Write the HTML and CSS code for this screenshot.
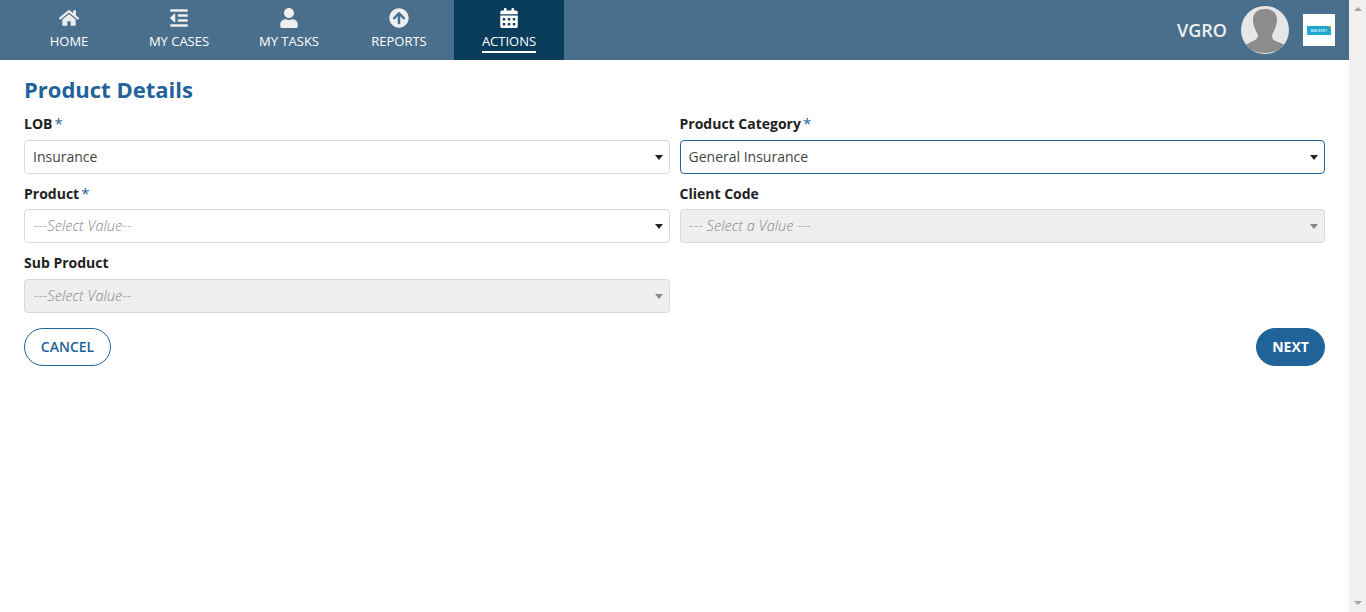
FILE: index.html
```html
<!DOCTYPE html>
<html>
<head lang="en">
    <meta charset="UTF-8">
    <title>Product Details</title>
    <link rel="stylesheet" href="styles.css">
</head>
<body>
<div id="page">
    <div id="main">
        <div id="header">
            <ul id="nav">
                <li>
                    <svg class="ico" width="20" height="20" viewBox="0 0 576 512"><path d="M280.37 148.26L96 300.11V464a16 16 0 0 0 16 16l112.06-.29a16 16 0 0 0 15.92-16V368a16 16 0 0 1 16-16h64a16 16 0 0 1 16 16v95.64a16 16 0 0 0 16 16.05L464 480a16 16 0 0 0 16-16V300L295.67 148.26a12.19 12.19 0 0 0-15.3 0zM571.6 251.47L488 182.56V44.05a12 12 0 0 0-12-12h-56a12 12 0 0 0-12 12v72.61L318.47 43a48 48 0 0 0-61 0L4.34 251.47a12 12 0 0 0-1.6 16.9l25.5 31A12 12 0 0 0 45.15 301l235.22-193.74a12.19 12.19 0 0 1 15.3 0L530.9 301a12 12 0 0 0 16.9-1.6l25.5-31a12 12 0 0 0-1.7-16.93z"/></svg>
                    <span>HOME</span>
                </li>
                <li>
                    <svg class="ico" width="18" height="20" viewBox="0 0 448 512"><path d="M100.69 363.29c10 10 27.31 2.93 27.31-11.31V160c0-14.32-17.33-21.31-27.31-11.31l-96 96a16 16 0 0 0 0 22.62zM432 416H16a16 16 0 0 0-16 16v32a16 16 0 0 0 16 16h416a16 16 0 0 0 16-16v-32a16 16 0 0 0-16-16zm3.17-128H204.83A12.82 12.82 0 0 0 192 300.83v38.34A12.82 12.82 0 0 0 204.83 352h230.34A12.82 12.82 0 0 0 448 339.17v-38.34A12.82 12.82 0 0 0 435.17 288zm0-128H204.83A12.82 12.82 0 0 0 192 172.83v38.34A12.82 12.82 0 0 0 204.83 224h230.34A12.82 12.82 0 0 0 448 211.17v-38.34A12.82 12.82 0 0 0 435.17 160zM432 32H16A16 16 0 0 0 0 48v32a16 16 0 0 0 16 16h416a16 16 0 0 0 16-16V48a16 16 0 0 0-16-16z"/></svg>
                    <span>MY CASES</span>
                </li>
                <li>
                    <svg class="ico" width="18" height="20" viewBox="0 0 448 512"><path d="M224 256c70.7 0 128-57.3 128-128S294.7 0 224 0 96 57.3 96 128s57.3 128 128 128zm89.6 32h-16.7c-22.2 10.2-46.9 16-72.9 16s-50.6-5.8-72.9-16h-16.7C60.2 288 0 348.2 0 422.4V464c0 26.5 21.5 48 48 48h352c26.5 0 48-21.5 48-48v-41.6c0-74.2-60.2-134.4-134.4-134.4z"/></svg>
                    <span>MY TASKS</span>
                </li>
                <li>
                    <svg class="ico" width="20" height="20" viewBox="0 0 512 512"><path d="M8 256C8 119 119 8 256 8s248 111 248 248-111 248-248 248S8 393 8 256zm143.6 28.9l72.4-75.5V392c0 13.3 10.7 24 24 24h16c13.3 0 24-10.7 24-24V209.4l72.4 75.5c9.3 9.7 24.8 9.9 34.3.4l10.9-11c9.4-9.4 9.4-24.6 0-33.9L273 107.7c-9.4-9.4-24.6-9.4-33.9 0L106.3 240.4c-9.4 9.4-9.4 24.6 0 33.9l10.9 11c9.6 9.5 25.1 9.3 34.4-.4z"/></svg>
                    <span>REPORTS</span>
                </li>
                <li class="selected">
                    <svg class="ico" width="18" height="20" viewBox="0 0 448 512"><path d="M0 464c0 26.5 21.5 48 48 48h352c26.5 0 48-21.5 48-48V192H0v272zm320-196c0-6.6 5.4-12 12-12h40c6.6 0 12 5.4 12 12v40c0 6.6-5.4 12-12 12h-40c-6.6 0-12-5.4-12-12v-40zm0 128c0-6.6 5.4-12 12-12h40c6.6 0 12 5.4 12 12v40c0 6.6-5.4 12-12 12h-40c-6.6 0-12-5.4-12-12v-40zM192 268c0-6.6 5.4-12 12-12h40c6.6 0 12 5.4 12 12v40c0 6.6-5.4 12-12 12h-40c-6.6 0-12-5.4-12-12v-40zm0 128c0-6.6 5.4-12 12-12h40c6.6 0 12 5.4 12 12v40c0 6.6-5.4 12-12 12h-40c-6.6 0-12-5.4-12-12v-40zM64 268c0-6.6 5.4-12 12-12h40c6.6 0 12 5.4 12 12v40c0 6.6-5.4 12-12 12H76c-6.6 0-12-5.4-12-12v-40zm0 128c0-6.6 5.4-12 12-12h40c6.6 0 12 5.4 12 12v40c0 6.6-5.4 12-12 12H76c-6.6 0-12-5.4-12-12v-40zM400 64h-48V16c0-8.8-7.2-16-16-16h-32c-8.8 0-16 7.2-16 16v48H160V16c0-8.8-7.2-16-16-16h-32c-8.8 0-16 7.2-16 16v48H48C21.5 64 0 85.5 0 112v48h448v-48c0-26.5-21.5-48-48-48z"/></svg>
                    <span>ACTIONS</span>
                </li>
            </ul>
            <div id="user">
                <span id="username">VGRO</span>
                <svg id="avatar" width="48" height="48" viewBox="0 0 48 48">
                    <circle cx="24" cy="24" r="24" fill="#e6e6e6"/>
                    <path d="M24 3 C32 3 36 7 36 14 C36 20 33 25 31 29 C31 33 33 35 37 36 C40 37 42 38 43 39 C39 44 32 47 24 47 C16 47 9 44 5 39 C7 37 10 36 12 35 C15 34 17 32 17 29 C15 25 12 20 12 14 C12 7 16 3 24 3 Z" fill="#8c8c8c"/>
                </svg>
                <div id="logo">
                    <div id="logobar">MACKERT</div>
                </div>
            </div>
        </div>
        <div id="content">
            <h1>Product Details</h1>
            <div id="fields">
                <div class="field">
                    <label>LOB<b>*</b></label>
                    <div class="select">Insurance</div>
                </div>
                <div class="field">
                    <label>Product Category<b>*</b></label>
                    <div class="select focus">General Insurance</div>
                </div>
                <div class="field">
                    <label>Product<b>*</b></label>
                    <div class="select empty">---Select Value--</div>
                </div>
                <div class="field">
                    <label>Client Code</label>
                    <div class="select empty off">--- Select a Value ---</div>
                </div>
                <div class="field">
                    <label>Sub Product</label>
                    <div class="select empty off">---Select Value--</div>
                </div>
            </div>
            <div id="buttons">
                <a class="btn" id="cancel">CANCEL</a>
                <a class="btn" id="next">NEXT</a>
            </div>
        </div>
    </div>
    <div id="scrollbar">
        <span class="up"></span>
        <span class="down"></span>
    </div>
</div>
</body>
</html>
```

FILE: styles.css
```css
*{
    margin: 0;
    padding: 0;
    box-sizing: border-box;
}
ul{
    list-style: none;
}
html,body{
    height: 100%;
    overflow: hidden;
}
body{
    font-family: "Open Sans", sans-serif;
    font-size: 14px;
    color: #222;
    background: #fff;
}
#page{
    display: flex;
    height: 612px;
}
#main{
    flex: 1;
    min-width: 0;
}
#header{
    height: 60px;
    background: #4a6f8c;
    display: flex;
    justify-content: space-between;
    padding-left: 14px;
}
#nav{
    display: flex;
}
#nav li{
    width: 110px;
    height: 60px;
    display: flex;
    flex-direction: column;
    align-items: center;
    color: #fff;
    font-size: 13px;
    line-height: 18px;
    padding-top: 8px;
}
#nav li span{
    margin-top: 4px;
    padding-bottom: 1px;
}
#nav li.selected{
    background: #0a3d5c;
}
#nav li.selected span{
    border-bottom: 2px solid #fff;
}
.ico{
    display: block;
    fill: #eee;
}
.selected .ico{
    fill: #fff;
}
#user{
    display: flex;
    align-items: center;
    padding-right: 14px;
}
#username{
    color: #f0f0f0;
    font-size: 18px;
    font-weight: 600;
    margin-right: 14px;
}
#avatar{
    display: block;
    margin-right: 14px;
}
#logo{
    width: 32px;
    height: 32px;
    background: #fff;
    display: flex;
    align-items: center;
    justify-content: center;
}
#logobar{
    width: 24px;
    height: 9px;
    background: #1ea7d0;
    color: #d8f0f8;
    font-size: 3px;
    line-height: 10px;
    text-align: center;
    font-weight: 700;
    letter-spacing: 0.3px;
    position: relative;
}
#logobar:after{
    content: "";
    position: absolute;
    right: 0;
    top: 0;
    border-top: 3px solid #e8963a;
    border-left: 3px solid transparent;
}
#content{
    padding: 0 24px;
}
h1{
    color: #1f6399;
    font-size: 22px;
    font-weight: 700;
    line-height: 28px;
    padding-top: 15px;
    height: 54px;
}
#fields{
    display: grid;
    grid-template-columns: 1fr 1fr;
    column-gap: 10px;
}
.field{
    height: 69.6px;
}
.field label{
    display: block;
    font-size: 14px;
    font-weight: 700;
    line-height: 20px;
    height: 25.8px;
    color: #222;
}
.field label b{
    color: #1f6399;
    font-weight: 400;
    font-size: 15px;
    line-height: 1;
    margin-left: 2px;
}
.select{
    height: 34px;
    border: 1px solid #d9d9d9;
    border-radius: 4px;
    padding-left: 8px;
    line-height: 32px;
    font-size: 14px;
    color: #444;
    background: #fff;
    position: relative;
}
.select:after{
    content: "";
    position: absolute;
    right: 6px;
    top: 14px;
    border-top: 5px solid #222;
    border-left: 4.5px solid transparent;
    border-right: 4.5px solid transparent;
}
.select.focus{
    border-color: #1f6399;
}
.select.empty{
    font-style: italic;
    font-weight: 300;
    font-size: 14.65px;
    line-height: 31px;
    color: #888;
    padding-left: 8.6px;
}
.select.off{
    background: #efefef;
}
.select.off:after{
    border-top-color: #888;
}
#buttons{
    display: flex;
    justify-content: space-between;
    margin-top: 5.2px;
}
.btn{
    height: 38px;
    line-height: 36px;
    border-radius: 19px;
    border: 1px solid #1f6399;
    font-size: 14px;
    font-weight: 600;
    text-align: center;
}
#cancel{
    width: 87px;
    color: #1f6399;
    background: #fff;
}
#next{
    width: 69px;
    color: #fff;
    font-weight: 700;
    background: #1f6399;
}
#scrollbar{
    width: 17px;
    background: #f0f0f0;
    display: flex;
    flex-direction: column;
    justify-content: space-between;
    align-items: center;
    padding: 7px 0;
}
#scrollbar span{
    width: 0;
    height: 0;
    border-left: 4px solid transparent;
    border-right: 4px solid transparent;
}
#scrollbar .up{
    border-bottom: 4px solid #a3a3a3;
}
#scrollbar .down{
    border-top: 4px solid #a3a3a3;
}
```
